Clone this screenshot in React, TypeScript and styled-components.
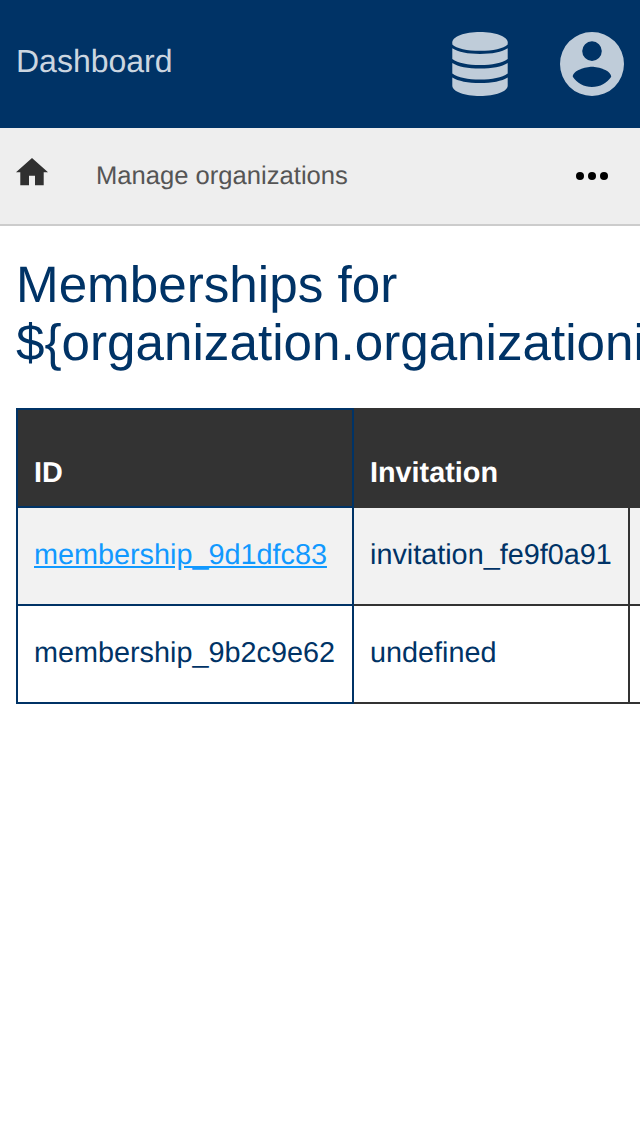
import React from "react";
import styled, { createGlobalStyle } from "styled-components";

const Global = createGlobalStyle`
  * { box-sizing: border-box; }
  html, body { margin: 0; overflow: hidden; background: #fff; }
  body {
    font-family: "Liberation Sans", Arial, sans-serif;
    color: #003366;
    text-rendering: geometricPrecision;
  }
`;

const Page = styled.div`
  width: 640px;
  height: 1136px;
  overflow: hidden;
`;

const Header = styled.header`
  display: flex;
  justify-content: space-between;
  height: 128px;
  padding: 32px 16px;
  background: #003366;
  color: #bfccd9;
`;

const Brand = styled.a`
  font-size: 32px;
  line-height: 58px;
  color: #ccd6e0;
`;

const Actions = styled.div`
  display: flex;
  gap: 48px;
`;

const Icon = styled.svg<{ $size: number }>`
  display: block;
  width: ${(p) => p.$size}px;
  height: ${(p) => p.$size}px;
  fill: currentColor;
`;

const Nav = styled.nav`
  display: flex;
  align-items: center;
  height: 98px;
  padding: 0 32px 0 16px;
  background: #eeeeee;
  border-bottom: 2px solid #cccccc;
  color: #000000;
`;

const HomeLink = styled.a`
  padding-bottom: 8px;
  color: #303030;
`;

const Crumb = styled.a`
  flex: 1;
  margin-left: 48px;
  padding-top: 1px;
  font-size: 25.6px;
  color: #555555;
`;

const Main = styled.main`
  padding: 30px 16px;
`;

const Title = styled.h1`
  margin: 0 0 36px;
  font-size: 51.2px;
  line-height: 58px;
  font-weight: 400;
`;

const Table = styled.table`
  width: 900px;
  table-layout: fixed;
  border-collapse: collapse;
  font-size: 28.8px;
`;

const Row = styled.tr<{ $shade?: boolean }>`
  height: 98px;
  background: ${(p) => (p.$shade ? "#f2f2f2" : "#ffffff")};
`;

const HeadCell = styled.th<{ $first?: boolean; $w?: number }>`
  width: ${(p) => (p.$w ? `${p.$w}px` : "auto")};
  height: 98px;
  padding: 30px 16px 0;
  border: 2px solid ${(p) => (p.$first ? "#003366" : "#333333")};
  background: #333333;
  color: #ffffff;
  text-align: left;
`;

const Cell = styled.td<{ $first?: boolean }>`
  padding: 0 16px 2px;
  border: 2px solid ${(p) => (p.$first ? "#003366" : "#333333")};
  white-space: nowrap;
`;

const Link = styled.a`
  color: #1199ff;
  text-decoration: underline;
`;

export default function App() {
  return (
    <Page>
      <Global />
      <Header>
        <Brand>Dashboard</Brand>
        <Actions>
          <Icon $size={64} viewBox="0 0 64 64">
            <path d="M32 0C16.700 0 4.300 4.600 4.300 10.300V12.400C8.500 16.500 19 18.800 32 18.800S55.500 16.500 59.700 12.400V10.300C59.700 4.600 47.300 0 32 0Z" />
            <path d="M4.300 16.300C10 20 20 22 32 22S54 20 59.700 16.300V27C54 31 44 33 32 33S10 31 4.300 27Z" />
            <path d="M4.300 30.900C10 34.600 20 36.500 32 36.500S54 34.600 59.700 30.900V41.600C54 45.600 44 47.600 32 47.600S10 45.600 4.300 41.600Z" />
            <path d="M4.300 45.500C10 49.200 20 51 32 51S54 49.200 59.700 45.500V53.700C59.700 59.400 47.300 64 32 64S4.300 59.400 4.300 53.700Z" />
          </Icon>
          <Icon $size={64} viewBox="0 0 64 64">
            <path
              fillRule="evenodd"
              d="M32 0a32 32 0 1 0 0 64a32 32 0 1 0 0-64ZM32 9.300a9.800 9.800 0 1 1 0 19.600a9.800 9.800 0 1 1 0-19.600ZM32 55C24 55 17 51 12.800 44.700C13 38.500 25.500 34.800 32 34.800S51 38.500 51.200 44.700C47 51 40 55 32 55Z"
            />
          </Icon>
        </Actions>
      </Header>
      <Nav>
        <HomeLink>
          <Icon $size={32} viewBox="0 0 32 32">
            <path d="M16 2L0 16.300H4.300V29.300H13V19.700H19V29.300H27.700V16.300H32Z" />
          </Icon>
        </HomeLink>
        <Crumb>Manage organizations</Crumb>
        <Icon $size={32} viewBox="0 0 32 32">
          <circle cx="4" cy="16" r="4" />
          <circle cx="16" cy="16" r="4" />
          <circle cx="28" cy="16" r="4" />
        </Icon>
      </Nav>
      <Main>
        <Title>{"Memberships for ${organization.organizationid}"}</Title>
        <Table>
          <thead>
            <Row>
              <HeadCell $first $w={336}>ID</HeadCell>
              <HeadCell $w={276}>Invitation</HeadCell>
              <HeadCell />
            </Row>
          </thead>
          <tbody>
            <Row $shade>
              <Cell $first><Link>membership_9d1dfc83</Link></Cell>
              <Cell>invitation_fe9f0a91</Cell>
              <Cell />
            </Row>
            <Row>
              <Cell $first>membership_9b2c9e62</Cell>
              <Cell>undefined</Cell>
              <Cell />
            </Row>
          </tbody>
        </Table>
      </Main>
    </Page>
  );
}
